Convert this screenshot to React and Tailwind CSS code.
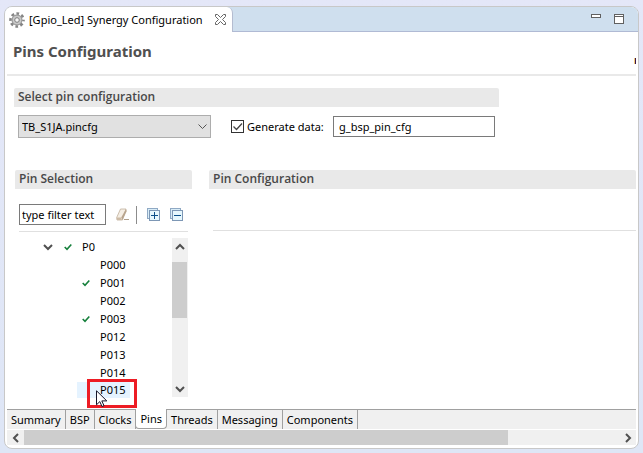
import { useState } from "react";

const PINS = [
  { name: "P000" },
  { name: "P001", used: true },
  { name: "P002" },
  { name: "P003", used: true },
  { name: "P012" },
  { name: "P013" },
  { name: "P014" },
  { name: "P015", hovered: true },
];

const PAGES = ["Summary", "BSP", "Clocks", "Pins", "Threads", "Messaging", "Components"];

function GearIcon() {
  return (
    <svg width="16" height="16" viewBox="0 0 16 16" aria-hidden="true">
      <circle cx="8" cy="8" r="6.500" fill="none" stroke="#858585" strokeWidth="2.600" strokeDasharray="2.700 2.405" strokeDashoffset="1.350" />
      <circle cx="8" cy="8" r="5" fill="#c9c9c9" stroke="#8c8c8c" />
      <circle cx="8" cy="8" r="2.300" fill="#f6f6f6" stroke="#808080" />
    </svg>
  );
}

function CloseIcon() {
  return (
    <svg width="11" height="11" viewBox="0 0 11 11" aria-hidden="true">
      <path d="M.5.5h2l3 3 3-3h2v2l-3 3 3 3v2h-2l-3-3-3 3h-2v-2l3-3-3-3z" fill="#fff" stroke="#666" />
    </svg>
  );
}

function MinimizeIcon() {
  return (
    <svg width="10" height="10" viewBox="0 0 10 10" aria-hidden="true" shapeRendering="crispEdges">
      <rect x=".5" y=".5" width="9" height="3" fill="#fff" stroke="#606060" />
    </svg>
  );
}

function MaximizeIcon() {
  return (
    <svg width="10" height="10" viewBox="0 0 10 10" aria-hidden="true" shapeRendering="crispEdges">
      <path d="M.5.5h9v9h-9zM.5 2.500h9" fill="#fff" stroke="#606060" />
    </svg>
  );
}

function EraserIcon() {
  return (
    <svg width="14" height="14" viewBox="0 0 14 14" aria-hidden="true">
      <path d="M4.500 1h5.500L6.500 12H1L.7 9.500z" fill="#f5eee4" stroke="#c0b09d" strokeWidth=".8" />
      <path d="M10 1l.8 2L6.500 12 5.200 9.500z" fill="#b9a58e" />
      <path d="M.7 9.500H5L6 12H1z" fill="#cdbba6" />
      <path d="M8 11.500h5" stroke="#b09f8b" />
    </svg>
  );
}

function BoxIcon({ plus }) {
  return (
    <svg width="13" height="13" viewBox="0 0 13 13" aria-hidden="true" shapeRendering="crispEdges">
      <path d="M.5.5h10v10H.5z" fill="#d9edf8" stroke="#8fa9c4" />
      <path d="M2.500 2.500h10v10h-10z" fill="#e6f7fd" stroke="#7d97b5" />
      <path d={plus ? "M4 7.500h7M7.500 4v7" : "M4 7.500h7"} stroke="#0b4f8a" fill="none" />
    </svg>
  );
}

function Chevron({ direction, className }) {
  const shapes = {
    down: "M1 3l4 4 4-4",
    up: "M1 7l4-4 4 4",
    left: "M7 1L3 5l4 4",
    right: "M3 1l4 4-4 4",
  };
  return (
    <svg width="10" height="10" viewBox="0 0 10 10" aria-hidden="true" className={className}>
      <path d={shapes[direction]} fill="none" stroke="#505050" strokeWidth="2" />
    </svg>
  );
}

function UsedMark() {
  return (
    <svg width="8" height="8" viewBox="0 0 8 8" aria-hidden="true">
      <path d="M.7 4l2.300 2.300L7.300 1.500" fill="none" stroke="#16803c" strokeWidth="1.600" />
    </svg>
  );
}

function Pointer() {
  return (
    <svg width="12" height="17" viewBox="0 0 12 17" aria-hidden="true" className="absolute top-2 left-[6px]">
      <path d="M.5.800v14l3.300-3.200 2.200 4.900 2-.9-2.200-4.700h5z" fill="#fff" stroke="#15152a" />
    </svg>
  );
}

function SectionTitle({ children }) {
  return (
    <h2 className="h-[19px] rounded-t-xs bg-[#e9e9e9] px-1 font-['Open_Sans','Noto_Sans',sans-serif] text-[12px] leading-[18px] font-semibold text-[#484848]">
      {children}
    </h2>
  );
}

function PinTree() {
  return (
    <div className="mr-1 ml-1 flex h-[159px]">
      <ul className="min-w-0 flex-1">
        <li>
          <div className="flex h-[18px] items-center pl-6">
            <button type="button" aria-label="Collapse P0" className="mr-[11px]">
              <Chevron direction="down" />
            </button>
            <UsedMark />
            <span className="ml-[10px]">P0</span>
          </div>
          <ul>
            {PINS.map((pin) => (
              <li key={pin.name} className="flex h-[18px] items-start pl-[58px]">
                <div
                  className={
                    "flex items-center pr-1 pl-[5px] " +
                    (pin.hovered ? "h-4 bg-[#e5f3ff] leading-4" : "h-[18px]")
                  }
                >
                  <span className="w-[18px]">{pin.used && <UsedMark />}</span>
                  <span>{pin.name}</span>
                </div>
              </li>
            ))}
          </ul>
        </li>
      </ul>
      <div className="flex w-4 flex-col items-center bg-[#f0f0f0]">
        <button type="button" aria-label="Scroll up" className="flex h-6 items-start pt-1">
          <Chevron direction="up" />
        </button>
        <div className="mr-px h-14 w-[15px] bg-[#cdcdcd]" />
        <button type="button" aria-label="Scroll down" className="mt-auto flex h-4 items-center">
          <Chevron direction="down" />
        </button>
      </div>
    </div>
  );
}

export default function App() {
  const [page, setPage] = useState("Pins");
  const [generate, setGenerate] = useState(true);

  return (
    <div className="min-h-screen bg-linear-to-b from-[#e4e7f8] to-[#dee6f6] px-1 pt-[6px] pb-1 font-['Noto_Sans','Open_Sans',sans-serif] text-[11px] leading-[18px] text-black">
      <main className="overflow-hidden rounded-lg border border-[#c8c8c8] bg-white">
        <header className="flex h-[25px] bg-[#cfdfee]">
          <div className="flex items-center rounded-tr-md border-r border-[#b4bcd0] bg-white pr-[6px] pl-1">
            <GearIcon />
            <span className="mr-3 ml-1 whitespace-nowrap">[Gpio_Led] Synergy Configuration</span>
            <button type="button" aria-label="Close editor">
              <CloseIcon />
            </button>
          </div>
          <div className="flex flex-1 items-start justify-end gap-[13px] border-b border-[#b0bad4] pt-[7px] pr-[14px]">
            <button type="button" aria-label="Minimize">
              <MinimizeIcon />
            </button>
            <button type="button" aria-label="Maximize">
              <MaximizeIcon />
            </button>
          </div>
        </header>

        <div className="mx-[2px] pb-[3px]">
          <div className="flex h-11 items-center justify-between border-b-2 border-[#e9e9e9] pl-[6px]">
            <h1 className="pb-1 text-[15px] leading-5 font-bold text-[#505050]">Pins Configuration</h1>
            <svg width="2" height="8" viewBox="0 0 2 8" aria-hidden="true" className="mt-4">
              <path d="M.5 1v6" stroke="#f2c879" />
              <path d="M1.500 1v6" stroke="#3a1648" />
            </svg>
          </div>

          <section className="mt-3 mr-[137px] ml-[7px]">
            <SectionTitle>Select pin configuration</SectionTitle>
            <div className="mt-2 mr-1 ml-1 flex items-center">
              <div className="relative w-[193px] shrink-0">
                <select
                  aria-label="Pin configuration file"
                  className="block h-[23px] w-full appearance-none border border-[#adadad] bg-[#e1e1e1] pl-[3px]"
                >
                  <option>TB_S1JA.pincfg</option>
                </select>
                <svg
                  width="9"
                  height="6"
                  viewBox="0 0 9 6"
                  aria-hidden="true"
                  className="pointer-events-none absolute top-[9px] right-1"
                >
                  <path d="M.5.5l4 4 4-4" fill="none" stroke="#555" />
                </svg>
              </div>
              <label className="ml-5 flex shrink-0 items-center">
                <input
                  type="checkbox"
                  checked={generate}
                  onChange={(e) => setGenerate(e.target.checked)}
                  className="peer size-[13px] appearance-none border border-[#333] bg-white"
                />
                <svg
                  width="13"
                  height="13"
                  viewBox="0 0 13 13"
                  aria-hidden="true"
                  className="pointer-events-none invisible -ml-[13px] peer-checked:visible"
                >
                  <path d="M2.500 6.500l3 3 5.500-6" fill="none" stroke="#444" strokeWidth="1.300" />
                </svg>
                <span className="ml-[3px]">Generate data:</span>
              </label>
              <input
                aria-label="Generated data name"
                defaultValue="g_bsp_pin_cfg"
                className="ml-auto h-[21px] w-[162px] border border-[#7a7a7a] bg-white px-[5px]"
              />
            </div>
          </section>

          <div className="mt-8 ml-2 flex gap-[17px]">
            <section className="w-[177px] shrink-0">
              <SectionTitle>Pin Selection</SectionTitle>
              <div className="mt-[15px] mr-1 ml-1 flex h-7 items-start border-b border-[#e0e0e0]">
                <input
                  aria-label="Filter pins"
                  defaultValue="type filter text"
                  className="h-[21px] w-[87px] border border-[#7a7a7a] bg-white px-[2px]"
                />
                <div className="flex h-[21px] items-center">
                  <button type="button" aria-label="Clear filter" className="ml-[10px]">
                    <EraserIcon />
                  </button>
                  <div className="mr-[10px] ml-[6px] h-[18px] w-px bg-[#8c8c8c]" />
                  <button type="button" aria-label="Expand all" className="mr-[10px]">
                    <BoxIcon plus />
                  </button>
                  <button type="button" aria-label="Collapse all">
                    <BoxIcon />
                  </button>
                </div>
              </div>
              <div className="relative mt-[6px]">
                <PinTree />
                <div className="absolute -bottom-[11px] left-[72px] h-[29px] w-[50px] border-3 border-[#ed1c24]">
                  <Pointer />
                </div>
              </div>
            </section>
            <section className="min-w-0 flex-1">
              <SectionTitle>Pin Configuration</SectionTitle>
              <div className="ml-1 h-[42px] border-b border-[#e0e0e0]" />
            </section>
          </div>

          <nav className="mt-3 flex h-5 bg-[#f0f0f0]" aria-label="Editor pages">
            {PAGES.map((name) => (
              <button
                key={name}
                type="button"
                onClick={() => setPage(name)}
                className={
                  name === page
                    ? "-ml-px rounded-b-sm border-x border-b border-[#a0a0a0] bg-white px-1"
                    : "border-t border-r border-[#a0a0a0] px-1"
                }
              >
                {name}
              </button>
            ))}
            <div className="flex-1 border-t border-[#a0a0a0]" />
          </nav>
          <div className="mt-px flex h-[15px] items-center justify-between bg-[#f0f0f0]">
            <button type="button" aria-label="Scroll left" className="flex w-[17px] justify-center">
              <Chevron direction="left" />
            </button>
            <div className="mr-[111px] h-full flex-1 bg-[#cdcdcd]" />
            <button type="button" aria-label="Scroll right" className="flex w-[17px] justify-center">
              <Chevron direction="right" />
            </button>
          </div>
        </div>
      </main>
    </div>
  );
}
